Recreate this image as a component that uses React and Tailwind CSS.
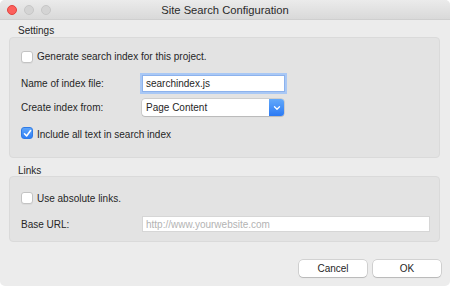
import React from "react";

function Checkbox({ checked }) {
  if (checked) {
    return (
      <div className="w-[12px] h-[12px] rounded-[3px] bg-gradient-to-b from-[#5fa5f9] to-[#2e7ef5] border border-[#2f7be6] flex items-center justify-center shrink-0">
        <svg width="9" height="9" viewBox="0 0 9 9">
          <path d="M1.5 4.8 L3.6 7 L7.6 1.6" fill="none" stroke="white" strokeWidth="1.6" strokeLinecap="round" strokeLinejoin="round" />
        </svg>
      </div>
    );
  }
  return <div className="w-[12px] h-[12px] rounded-[3px] bg-white border border-[#c3c3c3] shadow-[0_1px_0_rgba(0,0,0,0.04)] shrink-0" />;
}

function GroupLabel({ children, className }) {
  return <div className={"pl-[18px] leading-[12px] text-[10px] text-[#262626] " + className}>{children}</div>;
}

export default function App() {
  return (
    <div className="w-[450px] h-[286px] bg-white" style={{ fontFamily: '"Liberation Sans", Arial, sans-serif' }}>
      <div className="w-[450px] h-[286px] bg-[#ececec] rounded-[5px] overflow-hidden flex flex-col text-[10px] text-[#262626]">
        {/* title bar */}
        <div className="h-[20px] shrink-0 bg-gradient-to-b from-[#ebebeb] to-[#d9d9d9] border-b border-[#cfcfcf] grid grid-cols-[1fr_auto_1fr] items-center">
          <div className="flex items-center gap-[7px] pl-[7px]">
            <div className="w-[10px] h-[10px] rounded-full bg-[#fc605c] border border-[#e0443e]" />
            <div className="w-[10px] h-[10px] rounded-full bg-[#d4d4d4] border border-[#c6c6c6]" />
            <div className="w-[10px] h-[10px] rounded-full bg-[#d4d4d4] border border-[#c6c6c6]" />
          </div>
          <div className="text-[11.2px] text-[#2a2a2a] leading-[14px]">Site Search Configuration</div>
          <div />
        </div>

        {/* settings */}
        <GroupLabel className="h-[17px] pt-[5px]">Settings</GroupLabel>
        <div className="mx-[9px] w-[431px] h-[121px] bg-[#e3e3e3] border border-[#dadada] rounded-[4px] pl-[11px] flex flex-col">
          <div className="mt-[12px] h-[13px] flex items-center gap-[4px]">
            <Checkbox />
            <span>Generate search index for this project.</span>
          </div>
          <div className="mt-[12px] h-[17px] flex items-center">
            <div className="w-[121px]">Name of index file:</div>
            <div className="w-[143px] h-[17px] bg-white border border-[#8db2ec] shadow-[0_0_0_2px_#a9c8f5] flex items-center pl-[3px]">searchindex.js</div>
          </div>
          <div className="mt-[7px] h-[17px] flex items-center">
            <div className="w-[121px]">Create index from:</div>
            <div className="w-[142px] h-[17px] bg-white rounded-[3px] shadow-[0_0_0_0.5px_rgba(0,0,0,0.18),0_1px_1px_rgba(0,0,0,0.1)] flex items-center">
              <span className="flex-1 pl-[4px]">Page Content</span>
              <div className="w-[15px] h-[17px] rounded-r-[3px] bg-gradient-to-b from-[#63a9fa] to-[#2a79f4] flex items-center justify-center">
                <svg width="8" height="6" viewBox="0 0 8 6">
                  <path d="M1.5 1.8 L4 4.2 L6.5 1.8" fill="none" stroke="white" strokeWidth="1.3" strokeLinecap="round" strokeLinejoin="round" />
                </svg>
              </div>
            </div>
          </div>
          <div className="mt-[11px] h-[12px] flex items-center gap-[4px]">
            <Checkbox checked />
            <span className="mt-[2px]">Include all text in search index</span>
          </div>
        </div>

        {/* links */}
        <GroupLabel className="h-[18px] pt-[7px]">Links</GroupLabel>
        <div className="mx-[9px] w-[431px] h-[66px] bg-[#e3e3e3] border border-[#dadada] rounded-[4px] pl-[11px] flex flex-col">
          <div className="mt-[15px] h-[12px] flex items-center gap-[4px]">
            <Checkbox />
            <span>Use absolute links.</span>
          </div>
          <div className="mt-[12px] h-[16px] flex items-center">
            <div className="w-[121px]">Base URL:</div>
            <div className="w-[288px] h-[16px] bg-white border border-[#d6d6d6] flex items-center pl-[3px] text-[#b3b3b3]">http://www.yourwebsite.com</div>
          </div>
        </div>

        {/* buttons */}
        <div className="mt-[18px] flex justify-end gap-[6px] pr-[9px]">
          <button className="w-[68px] h-[17px] bg-white rounded-[4px] shadow-[0_0_0_0.5px_rgba(0,0,0,0.22),0_1px_1px_rgba(0,0,0,0.12)] text-[10px] leading-[17px] text-[#262626]">Cancel</button>
          <button className="w-[68px] h-[17px] bg-white rounded-[4px] shadow-[0_0_0_0.5px_rgba(0,0,0,0.22),0_1px_1px_rgba(0,0,0,0.12)] text-[10px] leading-[17px] text-[#262626]">OK</button>
        </div>
      </div>
    </div>
  );
}
